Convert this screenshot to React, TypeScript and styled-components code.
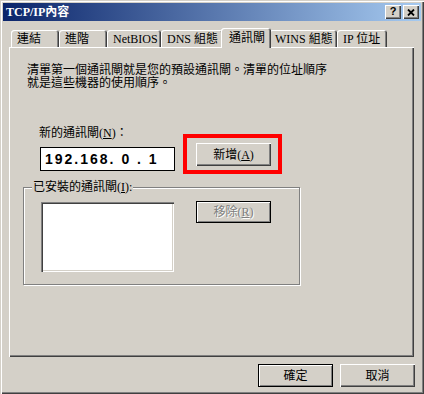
import React from "react";
import styled, { createGlobalStyle } from "styled-components";

const FACE = "#d4d0c8";

const GlobalStyle = createGlobalStyle`
  html, body {
    margin: 0;
    padding: 0;
    background: ${FACE};
  }
  body {
    font-family: "Liberation Serif", "Noto Sans CJK TC", serif;
    font-size: 12px;
    color: #000;
  }
  * {
    box-sizing: border-box;
  }
`;

const tabs = [
  { label: "連結", w: 48 },
  { label: "進階", w: 48 },
  { label: "NetBIOS", w: 54 },
  { label: "DNS 組態", w: 62 },
  { label: "通訊閘", w: 46, active: true },
  { label: "WINS 組態", w: 68 },
  { label: "IP 位址", w: 50 },
];

const App: React.FC = () => {
  return (
    <>
      <GlobalStyle />
      <Window>
        <TitleBar>
          <Title>TCP/IP內容</Title>
          <TitleButton>
            <Help>?</Help>
          </TitleButton>
          <TitleButton>
            <svg width="8" height="7" viewBox="0 0 8 7">
              <path d="M1 0.5 L7 6.5 M7 0.5 L1 6.5" stroke="#000" strokeWidth="1.8" />
            </svg>
          </TitleButton>
        </TitleBar>

        <TabStrip>
          {tabs.map((t) => (
            <Tab key={t.label} $w={t.w} $active={t.active}>
              {t.label}
            </Tab>
          ))}
        </TabStrip>

        <Panel>
          <Intro>
            清單第一個通訊閘就是您的預設通訊閘。清單的位址順序
            <br />
            就是這些機器的使用順序。
          </Intro>

          <AddRow>
            <AddressColumn>
              <FieldLabel>
                新的通訊閘(<u>N</u>)：
              </FieldLabel>
              <IpBox>192.168. 0 . 1</IpBox>
            </AddressColumn>
            <Highlight>
              <Button>
                新增(<u>A</u>)
              </Button>
            </Highlight>
          </AddRow>

          <GroupBox>
            <Legend>
              已安裝的通訊閘(<u>I</u>):
            </Legend>
            <GroupBody>
              <ListBox />
              <RemoveButton $default disabled>
                移除(<u>R</u>)
              </RemoveButton>
            </GroupBody>
          </GroupBox>
        </Panel>

        <Footer>
          <Button $default>確定</Button>
          <Button>取消</Button>
        </Footer>
      </Window>
    </>
  );
};

export default App;

// Styled Components
const Window = styled.div`
  width: 424px;
  height: 394px;
  padding: 3px;
  background: ${FACE};
  box-shadow: inset 1px 1px ${FACE}, inset 2px 2px #fff, inset -1px -1px #404040,
    inset -2px -2px #808080;
  display: flex;
  flex-direction: column;
`;

const TitleBar = styled.div`
  height: 18px;
  display: flex;
  align-items: center;
  gap: 2px;
  padding: 0 2px 0 3px;
  background: linear-gradient(to right, #0a246a, #a6caf0);
`;

const Title = styled.div`
  flex: 1;
  color: #fff;
  font-weight: bold;
  line-height: 18px;
  white-space: nowrap;
`;

const TitleButton = styled.div`
  width: 16px;
  height: 14px;
  background: ${FACE};
  display: flex;
  align-items: center;
  justify-content: center;
  box-shadow: inset 1px 1px #fff, inset -1px -1px #404040, inset -2px -2px #808080;
`;

const Help = styled.span`
  font: bold 11px "Liberation Sans", sans-serif;
  line-height: 11px;
  margin-top: -1px;
`;

const TabStrip = styled.div`
  display: flex;
  align-items: flex-start;
  height: 20px;
  margin: 7px 0 0 8px;
`;

const Tab = styled.div<{ $w: number; $active?: boolean }>`
  width: ${({ $w, $active }) => ($active ? $w + 4 : $w)}px;
  height: ${({ $active }) => ($active ? 20 : 17)}px;
  margin: ${({ $active }) => ($active ? "0 -2px" : "2px 0 0")};
  padding: ${({ $active }) => ($active ? "4px 0 0 8px" : "3px 0 0 6px")};
  line-height: 12px;
  white-space: nowrap;
  background: ${FACE};
  border-radius: 3px 3px 0 0;
  box-shadow: inset 1px 1px #fff, inset -1px 0 #404040, inset -2px 0 #808080;
  position: relative;
  z-index: ${({ $active }) => ($active ? 1 : 0)};
`;

const Panel = styled.div`
  width: 405px;
  height: 310px;
  margin: -1px 0 0 6px;
  padding-top: 17px;
  background: ${FACE};
  box-shadow: inset 1px 1px #fff, inset -1px -1px #404040, inset -2px -2px #808080;
`;

const Intro = styled.p`
  margin: 0 0 0 18px;
  line-height: 12.5px;
  white-space: nowrap;
`;

const AddRow = styled.div`
  display: flex;
  align-items: flex-start;
  margin: 38px 0 0 30px;
`;

const AddressColumn = styled.div`
  width: 136px;
  display: flex;
  flex-direction: column;
`;

const FieldLabel = styled.div`
  line-height: 12px;
  margin-bottom: 8px;
  white-space: nowrap;
`;

const IpBox = styled.div`
  margin-left: 1px;
  width: 135px;
  height: 24px;
  padding-left: 4px;
  border: 1px solid #000;
  background: #fff;
  font: bold 14px "Liberation Sans", sans-serif;
  line-height: 22px;
  letter-spacing: 2px;
  white-space: pre;
`;

const Highlight = styled.div`
  margin: 7px 0 0 8px;
  border: 4px solid #ff0000;
  padding: 5px 7px 4px 9px;
`;

const Button = styled.button<{ $default?: boolean }>`
  width: 75px;
  height: 23px;
  padding: 0;
  font: inherit;
  line-height: 12px;
  color: #000;
  background: ${FACE};
  border: ${({ $default }) => ($default ? "1px solid #000" : "none")};
  box-shadow: ${({ $default }) =>
    $default
      ? "inset 1px 1px #fff, inset -1px -1px #808080"
      : "inset 1px 1px #fff, inset -1px -1px #404040, inset -2px -2px #808080"};
  display: flex;
  align-items: center;
  justify-content: center;
  white-space: nowrap;

  &:disabled {
    color: #808080;
    text-shadow: 1px 1px #fff;
  }
`;

const GroupBox = styled.fieldset`
  width: 277px;
  margin: 7px 0 0 14px;
  padding: 9px 0 12px 8px;
  min-inline-size: 0;
  border: 1px solid #808080;
  box-shadow: inset 1px 1px #fff, 1px 1px #fff;
`;

const Legend = styled.legend`
  padding: 0 1px;
  line-height: 12px;
  background: ${FACE};
  white-space: nowrap;
`;

const GroupBody = styled.div`
  display: flex;
  align-items: flex-start;
`;

const ListBox = styled.div`
  margin-left: 9px;
  width: 133px;
  height: 70px;
  background: #fff;
  box-shadow: inset 1px 1px #808080, inset 2px 2px #404040, inset -1px -1px #fff,
    inset -2px -2px ${FACE};
`;

const RemoveButton = styled(Button)`
  height: 22px;
  margin: -1px 0 0 22px;
`;

const Footer = styled.div`
  display: flex;
  justify-content: flex-end;
  gap: 7px;
  margin-top: 7px;
  padding-right: 6px;
`;
